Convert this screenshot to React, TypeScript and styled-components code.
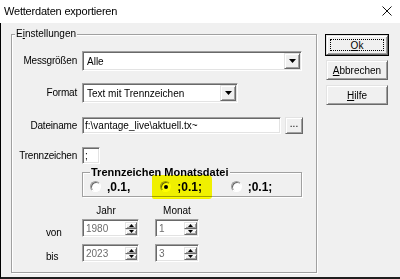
import React from "react";
import styled, { createGlobalStyle, css } from "styled-components";

const Global = createGlobalStyle`
  html, body { margin: 0; padding: 0; background: #f0f0f0; }
  body { font-family: "Liberation Sans", Arial, sans-serif; font-size: 10px; color: #000; }
  * { box-sizing: border-box; }
`;

const sunken = css`
  background: #fff;
  border: 1px solid;
  border-color: #a0a0a0 #fff #fff #a0a0a0;
  box-shadow: inset 1px 1px 0 #696969, inset -1px -1px 0 #e3e3e3;
`;

const raised = css`
  background: #f0f0f0;
  border: 1px solid;
  border-color: #e3e3e3 #696969 #696969 #e3e3e3;
  box-shadow: inset 1px 1px 0 #fff, inset -1px -1px 0 #a0a0a0;
`;

const Window = styled.div`
  width: 400px;
  height: 279px;
  display: flex;
  flex-direction: column;
  background: #f0f0f0;
  overflow: hidden;
`;

const TitleBar = styled.div`
  height: 23px;
  flex: none;
  background: #fff;
  display: flex;
  align-items: center;
  justify-content: space-between;
  padding: 0 8px 2px 4px;
`;

const Title = styled.span`
  font-size: 11px;
  letter-spacing: -0.2px;
`;

const Body = styled.div`
  flex: 1;
  display: flex;
  align-items: flex-start;
  padding: 11px 0 0 10px;
  border-left: 1px solid #000;
  border-bottom: 2px solid #1e1e1e;
`;

const GroupBox = styled.div<{ $width: number; $ml?: number; $mt?: number; $pb?: number }>`
  position: relative;
  width: ${(p) => p.$width}px;
  margin-left: ${(p) => p.$ml ?? 0}px;
  margin-top: ${(p) => p.$mt ?? 0}px;
  padding-bottom: ${(p) => p.$pb ?? 0}px;
  display: flex;
  flex-direction: column;
  border: 1px solid #a0a0a0;
  box-shadow: inset 1px 1px 0 #fff, 1px 1px 0 #fff;
`;

const Legend = styled.div<{ $bold?: boolean; $ml: number }>`
  align-self: flex-start;
  margin: -7px 0 0 ${(p) => p.$ml}px;
  padding: 0 1px;
  background: #f0f0f0;
  line-height: ${(p) => (p.$bold ? 13 : 12)}px;
  height: ${(p) => (p.$bold ? 13 : 12)}px;
  font-weight: ${(p) => (p.$bold ? 700 : 400)};
  font-size: ${(p) => (p.$bold ? 11 : 10)}px;
`;

const Row = styled.div<{ $mt: number; $start?: boolean }>`
  display: flex;
  align-items: ${(p) => (p.$start ? "flex-start" : "center")};
  gap: 5px;
  margin-top: ${(p) => p.$mt}px;
`;

const Label = styled.div<{ $left?: boolean; $pt?: number }>`
  width: 65px;
  flex: none;
  text-align: ${(p) => (p.$left ? "left" : "right")};
  padding-left: ${(p) => (p.$left ? 34 : 0)}px;
  padding-top: ${(p) => p.$pt ?? 0}px;
  line-height: 12px;
  letter-spacing: -0.2px;
`;

const Combo = styled.div<{ $width: number }>`
  ${sunken};
  width: ${(p) => p.$width}px;
  height: 20px;
  padding: 1px 1px 1px 4px;
  display: flex;
  align-items: center;
  justify-content: space-between;
`;

const DropButton = styled.div`
  ${raised};
  width: 16px;
  height: 16px;
  display: flex;
  align-items: center;
  justify-content: center;
`;

const TextBox = styled.div<{ $width: number }>`
  ${sunken};
  width: ${(p) => p.$width}px;
  height: 17px;
  padding: 0 0 0 2px;
  line-height: 15px;
  white-space: nowrap;
  overflow: hidden;
`;

const SmallButton = styled.div`
  ${raised};
  width: 18px;
  height: 17px;
  margin-left: -1px;
  display: flex;
  align-items: center;
  justify-content: center;
  line-height: 10px;
  padding-bottom: 3px;
`;

const RadioRow = styled.div`
  display: flex;
  margin-top: 1px;
  padding-left: 7px;
  height: 13px;
`;

const RadioOption = styled.div`
  width: 71px;
  display: flex;
  align-items: center;
  gap: 6px;
  font-weight: 700;
  font-size: 12px;
`;

const RadioCircle = styled.span<{ $checked?: boolean }>`
  width: 11px;
  height: 11px;
  border-radius: 50%;
  background: #fff;
  border: 1px solid;
  border-color: #a0a0a0 #fff #fff #a0a0a0;
  box-shadow: inset 1px 1px 0 #696969;
  display: flex;
  align-items: center;
  justify-content: center;
  &::after {
    content: "";
    width: 4px;
    height: 4px;
    border-radius: 50%;
    background: ${(p) => (p.$checked ? "#000" : "transparent")};
  }
`;

const Highlight = styled.span`
  position: absolute;
  left: 69px;
  top: 2px;
  width: 60px;
  height: 24px;
  background: #ffff00;
  border-radius: 2px 4px 3px 2px;
  mix-blend-mode: multiply;
  pointer-events: none;
`;

const HeaderCell = styled.div<{ $width: number; $pr?: number }>`
  width: ${(p) => p.$width}px;
  padding-right: ${(p) => p.$pr ?? 0}px;
  text-align: center;
  line-height: 12px;
`;

const SpinGroup = styled.div`
  display: flex;
  gap: 16px;
`;

const Spinner = styled.div<{ $width: number }>`
  ${sunken};
  width: ${(p) => p.$width}px;
  height: 18px;
  padding: 2px 1px 1px 3px;
  display: flex;
  justify-content: space-between;
  color: #6d6d6d;
  line-height: 13px;
`;

const SpinButtons = styled.div<{ $width: number }>`
  width: ${(p) => p.$width}px;
  display: flex;
  flex-direction: column;
`;

const SpinHalf = styled.div`
  ${raised};
  flex: 1;
  display: flex;
  align-items: center;
  justify-content: center;
`;

const ButtonColumn = styled.div`
  display: flex;
  flex-direction: column;
  gap: 5px;
  margin-left: 9px;
  padding-top: 1px;
`;

const DialogButton = styled.div<{ $default?: boolean }>`
  ${raised};
  position: relative;
  width: 62px;
  height: 20px;
  display: flex;
  align-items: center;
  justify-content: center;
  outline: ${(p) => (p.$default ? "1px solid #000" : "none")};
  &::after {
    content: "";
    display: ${(p) => (p.$default ? "block" : "none")};
    position: absolute;
    inset: 3px;
    border: 1px dotted #000;
  }
`;

const Arrow = ({ up }: { up?: boolean }) => (
  <svg width="7" height="4" viewBox="0 0 7 4">
    <polygon points={up ? "3.5,0 7,4 0,4" : "0,0 7,0 3.5,4"} fill="#000" />
  </svg>
);

const SmallArrow = ({ up }: { up?: boolean }) => (
  <svg width="5" height="3" viewBox="0 0 5 3">
    <polygon points={up ? "2.5,0 5,3 0,3" : "0,0 5,0 2.5,3"} fill="#000" />
  </svg>
);

const CloseIcon = () => (
  <svg width="10" height="10" viewBox="0 0 10 10">
    <path d="M0.5 0.5 L9.5 9.5 M9.5 0.5 L0.5 9.5" stroke="#111" strokeWidth="1" />
  </svg>
);

const Spin = ({ value, width, btn }: { value: string; width: number; btn: number }) => (
  <Spinner $width={width}>
    <span>{value}</span>
    <SpinButtons $width={btn}>
      <SpinHalf>
        <SmallArrow up />
      </SpinHalf>
      <SpinHalf>
        <SmallArrow />
      </SpinHalf>
    </SpinButtons>
  </Spinner>
);

export default function App() {
  return (
    <>
      <Global />
      <Window>
        <TitleBar>
          <Title>Wetterdaten exportieren</Title>
          <CloseIcon />
        </TitleBar>
        <Body>
          <GroupBox $width={306} $pb={9}>
            <Legend $ml={3}>
              E<u>i</u>nstellungen
            </Legend>
            <Row $mt={11}>
              <Label>Messgrößen</Label>
              <Combo $width={220}>
                <span>Alle</span>
                <DropButton>
                  <Arrow />
                </DropButton>
              </Combo>
            </Row>
            <Row $mt={12}>
              <Label>Format</Label>
              <Combo $width={156}>
                <span>Text mit Trennzeichen</span>
                <DropButton>
                  <Arrow />
                </DropButton>
              </Combo>
            </Row>
            <Row $mt={14}>
              <Label>Dateiname</Label>
              <TextBox $width={199}>f:\vantage_live\aktuell.tx~</TextBox>
              <SmallButton>...</SmallButton>
            </Row>
            <Row $mt={13}>
              <Label>Trennzeichen</Label>
              <TextBox $width={18}>;</TextBox>
            </Row>
            <GroupBox $width={220} $ml={70} $mt={8} $pb={3}>
              <Legend $bold $ml={7}>
                Trennzeichen Monatsdatei
              </Legend>
              <RadioRow>
                <RadioOption>
                  <RadioCircle />
                  <span>,0.1,</span>
                </RadioOption>
                <RadioOption>
                  <RadioCircle $checked />
                  <span>;0.1;</span>
                </RadioOption>
                <RadioOption>
                  <RadioCircle />
                  <span>;0.1;</span>
                </RadioOption>
              </RadioRow>
              <Highlight />
            </GroupBox>
            <Row $mt={8}>
              <Label />
              <SpinGroup>
                <HeaderCell $width={57} $pr={9}>
                  Jahr
                </HeaderCell>
                <HeaderCell $width={44}>Monat</HeaderCell>
              </SpinGroup>
            </Row>
            <Row $mt={2} $start>
              <Label $left $pt={8}>
                von
              </Label>
              <SpinGroup>
                <Spin value="1980" width={57} btn={12} />
                <Spin value="1" width={44} btn={13} />
              </SpinGroup>
            </Row>
            <Row $mt={5} $start>
              <Label $left $pt={7}>
                bis
              </Label>
              <SpinGroup>
                <Spin value="2023" width={57} btn={12} />
                <Spin value="3" width={44} btn={13} />
              </SpinGroup>
            </Row>
          </GroupBox>
          <ButtonColumn>
            <DialogButton $default>
              <span>
                <u>O</u>k
              </span>
            </DialogButton>
            <DialogButton>
              <span>
                <u>A</u>bbrechen
              </span>
            </DialogButton>
            <DialogButton>
              <span>
                <u>H</u>ilfe
              </span>
            </DialogButton>
          </ButtonColumn>
        </Body>
      </Window>
    </>
  );
}
